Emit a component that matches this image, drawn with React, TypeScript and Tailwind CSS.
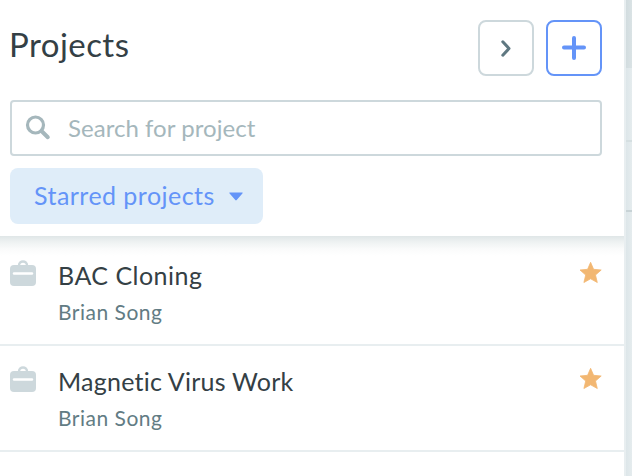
import { FC } from "react";

type Project = {
  name: string;
  owner: string;
  nameSpacing: string;
};

const projects: Project[] = [
  { name: "BAC Cloning", owner: "Brian Song", nameSpacing: "tracking-[0.48px]" },
  { name: "Magnetic Virus Work", owner: "Brian Song", nameSpacing: "tracking-[0.23px]" },
];

const SearchIcon: FC = () => (
  <svg width="28" height="28" viewBox="0 0 28 28" fill="none" stroke="#a5b7bc">
    <circle cx="11.5" cy="11" r="8" strokeWidth="3.2" />
    <path d="M17.5 17 L23.8 23.2" strokeWidth="4" strokeLinecap="round" />
  </svg>
);

const BriefcaseIcon: FC = () => (
  <svg width="26" height="26" viewBox="0 0 26 26" fill="none">
    <path d="M9 6 V5.5 C9 .2 17 .2 17 5.5 V6" stroke="#cdd8dc" strokeWidth="2.4" />
    <rect y="5" width="26" height="21" rx="4" fill="#cdd8dc" />
    <path d="M4 13.5 H22" stroke="#fff" strokeWidth="2.4" strokeLinecap="round" />
  </svg>
);

const StarIcon: FC = () => (
  <svg width="24" height="24" viewBox="0 0 24 24" fill="#f2b772" stroke="#f2b772">
    <path
      d="M11.6 1.3 L14.6 8.3 L22.2 9 L16.5 14 L18.3 21.5 L11.6 17.8 L4.9 21.5 L6.7 14 L1 9 L8.6 8.3 Z"
      strokeWidth=".8"
      strokeLinejoin="round"
    />
  </svg>
);

const ProjectRow: FC<Project> = (props) => (
  <li className="flex h-[106px] items-start border-b-2 border-[#e8eef0] pl-[10px] pr-[21px]">
    <div className="mt-5 w-12">
      <BriefcaseIcon />
    </div>
    <div className="flex-1 whitespace-nowrap">
      <p className={`mt-[19px] text-[25px] leading-[32px] text-[#344045] ${props.nameSpacing}`}>
        {props.name}
      </p>
      <p className="mt-[8px] text-[21px] leading-[26px] tracking-[0.5px] text-[#627c84]">
        {props.owner}
      </p>
    </div>
    <div className="mt-[21px]">
      <StarIcon />
    </div>
  </li>
);

const App: FC = () => {
  return (
    <div className="flex h-[476px] w-[632px] overflow-hidden bg-white font-['Lato',sans-serif]">
      <aside className="flex w-[626px] flex-col border-r-2 border-[#e8eef0]">
        <header className="h-[236px] px-[10px] pt-5">
          <div className="flex h-14 w-[592px] gap-3">
            <h1 className="-ml-px mt-[2px] flex-1 text-[33px] leading-[44px] tracking-[0.45px] text-[#344045]">
              Projects
            </h1>
            <button className="flex size-14 items-center justify-center rounded-lg border-2 border-[#cdd8dc]">
              <svg width="52" height="52" viewBox="0 0 52 52" fill="none">
                <path
                  d="M22.8 19.8 L29 26.5 L22.8 33.2"
                  stroke="#5f7881"
                  strokeWidth="3"
                  strokeLinecap="round"
                  strokeLinejoin="round"
                />
              </svg>
            </button>
            <button className="flex size-14 items-center justify-center rounded-lg border-2 border-[#6494f8]">
              <svg width="52" height="52" viewBox="0 0 52 52" fill="none">
                <path d="M26 16 V36 M16 25.5 H36" stroke="#6494f8" strokeWidth="4" strokeLinecap="round" />
              </svg>
            </button>
          </div>

          <label className="mt-6 flex h-14 w-[592px] items-center rounded border-2 border-[#cdd8dc] pl-3">
            <SearchIcon />
            <input
              className="ml-4 flex-1 text-[24px] tracking-[0.04px] text-[#344045] outline-none placeholder:text-[#a5b7bc]"
              placeholder="Search for project"
            />
          </label>

          <button className="mt-3 flex h-14 w-[253px] items-center rounded-lg bg-[#dfedf9] pl-6 text-[25px] tracking-[0.46px] text-[#6494f8]">
            <span className="w-[195px] whitespace-nowrap text-left">Starred projects</span>
            <svg width="14" height="9" viewBox="0 0 14 9" fill="#6494f8">
              <path d="M.8 .5 H13.2 Q14.2 .6 13.4 1.5 L7.7 8 Q7 8.8 6.3 8 L.6 1.5 Q-.2 .6 .8 .5 Z" />
            </svg>
          </button>
        </header>

        {/* Shadow cast by the header on the list */}
        <ul className="flex-1 bg-[linear-gradient(to_bottom,#dfe6e7_0px,#eef2f2_6px,#fafbfb_13px,#fff_20px)] pt-1">
          {projects.map((project) => (
            <ProjectRow key={project.name} {...project} />
          ))}
        </ul>
      </aside>

      {/* Edge of the next panel */}
      <div className="flex w-[6px] flex-col bg-[linear-gradient(to_right,#dde6e9,#e5ecee)]">
        <div className="h-[68px] bg-[linear-gradient(to_right,#d2dcdf,#dae3e5)]" />
        <div className="h-[72px]" />
        <div className="h-[2px] bg-[#d5dfe1]" />
        <div className="h-[68px]" />
        <div className="h-[2px] bg-[#c8d3d6]" />
      </div>
    </div>
  );
};

export default App;
